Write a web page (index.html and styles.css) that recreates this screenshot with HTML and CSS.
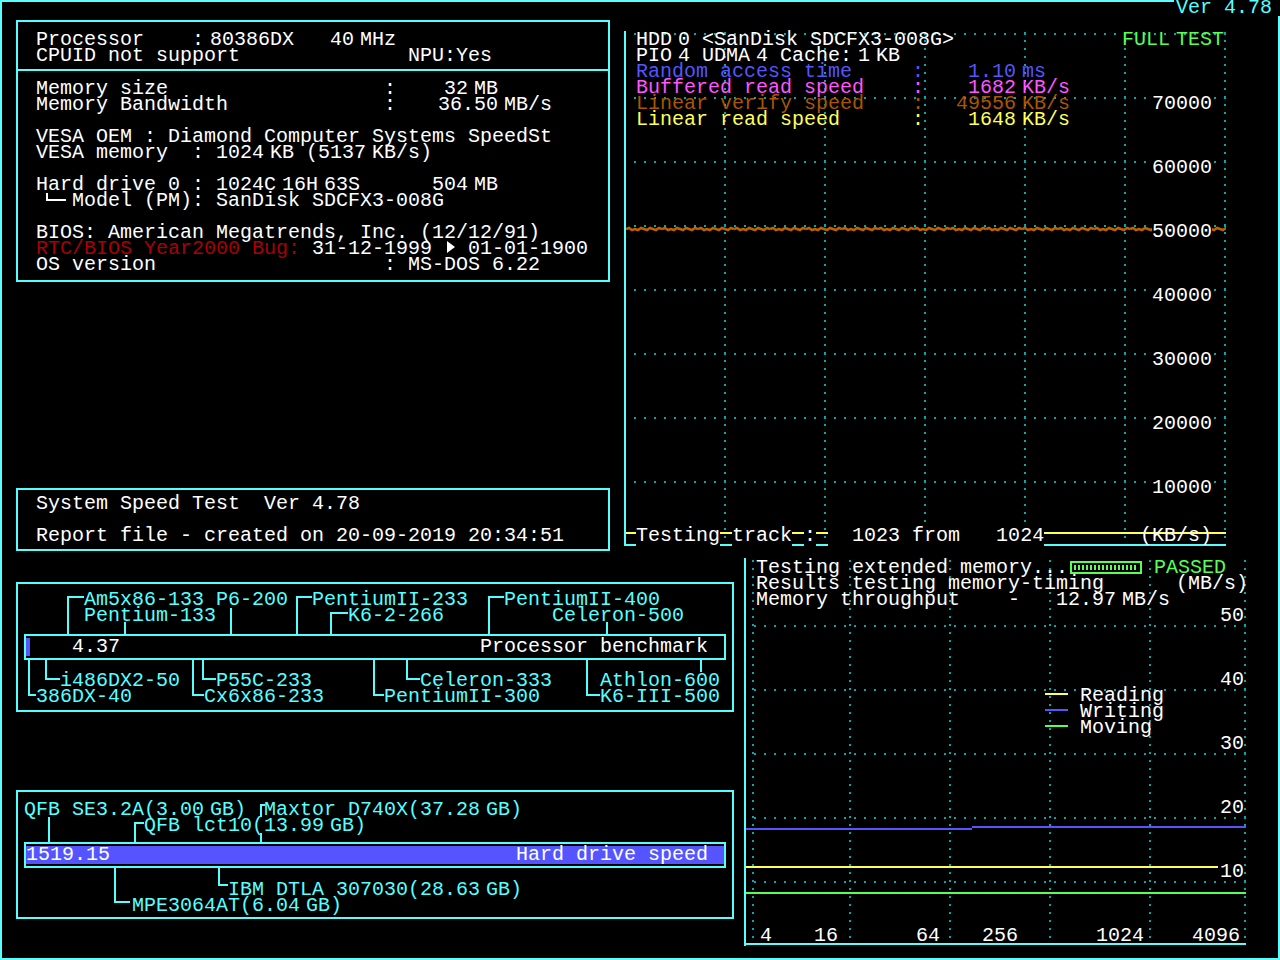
FILE: index.html
```html
<!DOCTYPE html>
<html>
<head>
<meta charset="utf-8">
<title>System Speed Test 4.78</title>
<link rel="stylesheet" href="styles.css">
</head>
<body>
<div class="screen">
  <div class="ver">Ver 4.78</div>

  <div class="top">
    <div class="left-top">
      <section class="box info">
        <div class="cpu">
          <div class="ln">Processor    :<i class="h"></i>80386DX   40<i class="h"></i>MHz</div>
          <div class="ln">CPUID not support              NPU:Yes</div>
        </div>
        <div class="sys">
          <div class="grp">
            <div class="ln">Memory size                  :    32<i class="h"></i>MB</div>
            <div class="ln">Memory Bandwidth             :   <i class="h"></i>36.50<i class="h"></i>MB/s</div>
          </div>
          <div class="grp">
            <div class="ln">VESA OEM : Diamond Computer Systems SpeedSt</div>
            <div class="ln">VESA memory  : 1024<i class="h"></i>KB (5137<i class="h"></i>KB/s)</div>
          </div>
          <div class="grp">
            <div class="ln">Hard drive 0 : 1024C<i class="h"></i>16H<i class="h"></i>63S      504<i class="h"></i>MB</div>
            <div class="ln"><i class="elbow"></i>Model (PM): SanDisk SDCFX3-008G</div>
          </div>
          <div class="grp">
            <div class="ln">BIOS: American Megatrends, Inc. (12/12/91)</div>
            <div class="ln"><span class="red">RTC/BIOS Year2000 Bug: </span>31-12-1999 <i class="tri"></i> 01-01-1900</div>
            <div class="ln">OS version                   : MS-DOS 6.22</div>
          </div>
        </div>
      </section>

      <section class="box sysbox">
        <div class="ln">System Speed Test  Ver 4.78</div>
        <div class="ln gap">Report file - created on 20-09-2019 20:34:51</div>
      </section>
    </div>

    <div class="hdd">
      <svg class="plot" width="602" height="515" viewBox="0 0 602 515">
        <defs>
          <pattern id="jit" width="36" height="8" x="2" y="194" patternUnits="userSpaceOnUse">
            <path d="M0 4 L3 3 L6 5 L9 4 L12 5 L15 3 L18 4 L21 5 L24 3 L27 4 L30 5 L33 3 L36 4" fill="none" stroke="#c06000" stroke-width="2.5"/>
          </pattern>
        </defs>
        <g stroke="#00aaaa" stroke-width="2" stroke-dasharray="2 8">
          <line x1="0" y1="3" x2="602" y2="3"/>
          <line x1="0" y1="67" x2="602" y2="67"/>
          <line x1="0" y1="131" x2="602" y2="131"/>
          <line x1="0" y1="195" x2="602" y2="195"/>
          <line x1="0" y1="259" x2="602" y2="259"/>
          <line x1="0" y1="323" x2="602" y2="323"/>
          <line x1="0" y1="387" x2="602" y2="387"/>
          <line x1="0" y1="451" x2="602" y2="451"/>
        </g>
        <g stroke="#00aaaa" stroke-width="2" stroke-dasharray="2 6">
          <line x1="101" y1="1" x2="101" y2="513"/>
          <line x1="201" y1="1" x2="201" y2="513"/>
          <line x1="301" y1="1" x2="301" y2="513"/>
          <line x1="401" y1="1" x2="401" y2="513"/>
          <line x1="501" y1="1" x2="501" y2="513"/>
          <line x1="601" y1="1" x2="601" y2="513"/>
        </g>
        <rect x="2" y="194" width="600" height="8" fill="url(#jit)"/>
        <rect x="2" y="501" width="600" height="2" fill="#ffff55"/>
        <rect x="0" y="0" width="2" height="515" fill="#55ffff"/>
        <rect x="0" y="513" width="602" height="2" fill="#55ffff"/>
      </svg>
      <div class="hdd-text">
        <div class="ln"><span class="grn full">FULL<i class="h"></i>TEST</span>HDD<i class="h"></i>0 &lt;SanDisk SDCFX3-008G&gt;</div>
        <div class="ln">PIO<i class="h"></i>4 UDMA<i class="h"></i>4 Cache:<i class="h"></i>1<i class="h"></i>KB</div>
        <div class="ln blu"><span class="lbl">Random access time</span><span class="col">:</span><span class="val">1.10</span><i class="h"></i>ms</div>
        <div class="ln mag"><span class="lbl">Buffered read speed</span><span class="col">:</span><span class="val">1682</span><i class="h"></i>KB/s</div>
        <div class="ln brn"><span class="ylab">70000</span><span class="lbl">Linear verify speed</span><span class="col">:</span><span class="val">49556</span><i class="h"></i>KB/s</div>
        <div class="ln yel"><span class="lbl">Linear read speed</span><span class="col">:</span><span class="val">1648</span><i class="h"></i>KB/s</div>
        <div class="scale">
          <div class="ln"><span class="ylab">60000</span></div>
          <div class="ln"><span class="ylab">50000</span></div>
          <div class="ln"><span class="ylab">40000</span></div>
          <div class="ln"><span class="ylab">30000</span></div>
          <div class="ln"><span class="ylab">20000</span></div>
          <div class="ln"><span class="ylab">10000</span></div>
        </div>
        <div class="ln track"><span class="kbs">(KB/s)</span><span class="bk">Testing</span> <span class="bk">track</span> <span class="bk">:</span> <span class="bk">  1023 from   1024</span></div>
      </div>
    </div>
  </div>

  <div class="bottom">
    <div class="left-bottom">
      <section class="box bench">
        <svg class="leaders" width="718" height="130" viewBox="0 0 718 130">
          <g fill="#55ffff">
            <rect x="51" y="14" width="2" height="38"/><rect x="51" y="14" width="17" height="2"/>
            <rect x="108" y="40" width="2" height="12"/>
            <rect x="214" y="26" width="2" height="26"/>
            <rect x="280" y="14" width="2" height="38"/><rect x="280" y="14" width="16" height="2"/>
            <rect x="314" y="30" width="2" height="22"/><rect x="314" y="30" width="18" height="2"/>
            <rect x="472" y="14" width="2" height="38"/><rect x="472" y="14" width="16" height="2"/>
            <rect x="590" y="40" width="2" height="12"/>
            <rect x="12" y="78" width="2" height="36"/><rect x="12" y="112" width="8" height="2"/>
            <rect x="29" y="78" width="2" height="20"/><rect x="29" y="96" width="15" height="2"/>
            <rect x="176" y="78" width="2" height="36"/><rect x="176" y="112" width="12" height="2"/>
            <rect x="186" y="78" width="2" height="20"/><rect x="186" y="96" width="14" height="2"/>
            <rect x="357" y="78" width="2" height="36"/><rect x="357" y="112" width="11" height="2"/>
            <rect x="390" y="78" width="2" height="20"/><rect x="390" y="96" width="14" height="2"/>
            <rect x="570" y="78" width="2" height="36"/><rect x="570" y="112" width="14" height="2"/>
            <rect x="684" y="78" width="2" height="12"/>
          </g>
        </svg>
        <div class="ln cy">     Am5x86-133 P6-200  PentiumII-233   PentiumII-400</div>
        <div class="ln cy">     Pentium-133           K6-2-266         Celeron-500</div>
        <div class="bar">
          <i class="fill"></i>
          <span class="score">4.37</span>
          <span class="bar-title">Processor benchmark</span>
        </div>
        <div class="ln cy below">   i486DX2-50   P55C-233         Celeron-333    Athlon-600</div>
        <div class="ln cy"> 386DX-40      Cx6x86-233     PentiumII-300     K6-III-500</div>
      </section>

      <section class="box hdbench">
        <svg class="leaders" width="718" height="129" viewBox="0 0 718 129">
          <g fill="#55ffff">
            <rect x="32" y="27" width="2" height="25"/>
            <rect x="244" y="14" width="2" height="13"/><rect x="244" y="14" width="5" height="2"/>
            <rect x="244" y="43" width="2" height="9"/>
            <rect x="118" y="32" width="2" height="20"/><rect x="118" y="32" width="10" height="2"/>
            <rect x="98" y="78" width="2" height="35"/><rect x="98" y="111" width="16" height="2"/>
            <rect x="202" y="78" width="2" height="18"/><rect x="202" y="94" width="10" height="2"/>
          </g>
        </svg>
        <div class="ln cy">QFB SE3.2A(3.00<i class="h"></i>GB) <i class="h"></i>Maxtor D740X(37.28<i class="h"></i>GB)</div>
        <div class="ln cy">          QFB lct10(13.99<i class="h"></i>GB)</div>
        <div class="bar hbar">
          <div class="hfill">
            <span class="score">1519.15</span>
            <span class="bar-title">Hard drive speed</span>
          </div>
        </div>
        <div class="ln cy below2">                 IBM DTLA 307030(28.63<i class="h"></i>GB)</div>
        <div class="ln cy">         MPE3064AT(6.04<i class="h"></i>GB)</div>
      </section>
    </div>

    <div class="mem">
      <svg class="plot" width="502" height="391" viewBox="0 0 502 391">
        <g stroke="#00aaaa" stroke-width="2" stroke-dasharray="2 8">
          <line x1="0" y1="71" x2="502" y2="71"/>
          <line x1="0" y1="135" x2="502" y2="135"/>
          <line x1="0" y1="199" x2="502" y2="199"/>
          <line x1="0" y1="263" x2="502" y2="263"/>
          <line x1="0" y1="327" x2="502" y2="327"/>
        </g>
        <g stroke="#00aaaa" stroke-width="2" stroke-dasharray="2 6">
          <line x1="9" y1="5" x2="9" y2="389"/>
          <line x1="106" y1="5" x2="106" y2="389"/>
          <line x1="206" y1="5" x2="206" y2="389"/>
          <line x1="306" y1="5" x2="306" y2="389"/>
          <line x1="406" y1="5" x2="406" y2="389"/>
          <line x1="501" y1="5" x2="501" y2="389"/>
        </g>
        <rect x="2" y="273" width="226" height="2" fill="#5555ff"/>
        <rect x="228" y="271" width="274" height="2" fill="#5555ff"/>
        <rect x="2" y="311" width="472" height="2" fill="#ffff55"/>
        <rect x="2" y="337" width="500" height="2" fill="#55ff55"/>
        <rect x="301" y="138" width="23" height="2" fill="#ffff55"/>
        <rect x="301" y="154" width="23" height="2" fill="#5555ff"/>
        <rect x="301" y="170" width="23" height="2" fill="#55ff55"/>
        <rect x="0" y="3" width="2" height="388" fill="#55ffff"/>
        <rect x="0" y="388" width="502" height="2" fill="#55ffff"/>
      </svg>
      <div class="mem-text">
        <div class="ln">Testing extended memory...<i class="prog"></i><span class="grn passed">PASSED</span></div>
        <div class="ln">Results testing memory-timing<span class="unit">(MB/s)</span></div>
        <div class="ln">Memory throughput    -   12.97<i class="h"></i>MB/s</div>
        <div class="ln"><span class="mlab">50</span></div>
        <div class="ln sp3"><span class="mlab">40</span></div>
        <div class="ln"><span class="legend">Reading</span></div>
        <div class="ln"><span class="legend">Writing</span></div>
        <div class="ln"><span class="legend">Moving</span></div>
        <div class="ln"><span class="mlab">30</span></div>
        <div class="ln sp3"><span class="mlab">20</span></div>
        <div class="ln sp3"><span class="mlab">10</span></div>
        <div class="ln sp3 xaxis">4   <i class="h"></i>16      <i class="h"></i>64   <i class="h"></i>256      <i class="h"></i>1024    4096</div>
      </div>
    </div>
  </div>
</div>
</body>
</html>
```

FILE: styles.css
```css
* { box-sizing: border-box; }

html, body {
  margin: 0;
  padding: 0;
  background: #000;
}

body {
  width: 1280px;
  height: 960px;
  overflow: hidden;
  font-family: "Liberation Mono", "DejaVu Sans Mono", monospace;
  font-size: 20px;
  line-height: 16px;
  color: #fff;
}

.screen {
  position: relative;
  width: 1280px;
  height: 960px;
  border: 2px solid #55ffff;
}

.ver {
  position: absolute;
  top: -2px;
  right: -2px;
  height: 16px;
  padding: 0 8px 0 2px;
  background: #000;
  color: #55ffff;
  white-space: pre;
}

.ln {
  height: 16px;
  white-space: pre;
}

.h {
  display: inline-block;
  width: 6px;
}

.red { color: #aa0000; }
.cy { color: #55ffff; }
.grn { color: #55ff55; }
.blu { color: #5555ff; }
.mag { color: #ff55ff; }
.brn { color: #aa5500; }
.yel { color: #ffff55; }

/* ---------- top row ---------- */
.top {
  display: flex;
  height: 551px;
}

.left-top {
  display: flex;
  flex-direction: column;
  width: 594px;
  margin: 18px 0 0 14px;
}

.box {
  border: 2px solid #55ffff;
}

.info {
  height: 262px;
}

.cpu {
  height: 47px;
  padding: 10px 0 0 18px;
}

.sys {
  border-top: 2px solid #55ffff;
  padding: 10px 0 0 18px;
}

.grp + .grp {
  margin-top: 16px;
}

.elbow {
  display: inline-block;
  width: 20px;
  height: 8px;
  margin: 0 6px 0 10px;
  vertical-align: top;
  border-left: 2px solid #fff;
  border-bottom: 2px solid #fff;
}

.tri {
  display: inline-block;
  width: 0;
  height: 0;
  margin: 0 1px 0 3px;
  vertical-align: top;
  border-left: 8px solid #fff;
  border-top: 6px solid transparent;
  border-bottom: 6px solid transparent;
}

.sysbox {
  height: 63px;
  margin-top: 206px;
  padding: 6px 0 0 18px;
}

.gap {
  margin-top: 16px;
}

/* ---------- HDD graph ---------- */
.hdd {
  position: relative;
  width: 602px;
  height: 515px;
  margin: 29px 0 0 14px;
}

.plot {
  position: absolute;
  left: 0;
  top: 0;
}

.hdd-text {
  position: relative;
  padding: 1px 0 0 12px;
}

.full {
  float: right;
  margin-right: 2px;
}

.lbl {
  display: inline-block;
  width: 276px;
}

.col {
  display: inline-block;
  width: 12px;
}

.val {
  display: inline-block;
  width: 92px;
  text-align: right;
}

.ylab {
  float: right;
  margin-right: 14px;
  color: #fff;
  background: #000;
}

.scale {
  margin-top: 32px;
}

.scale .ln + .ln {
  margin-top: 48px;
}

.track {
  margin-top: 32px;
}

.bk {
  background: #000;
}

.kbs {
  float: right;
  margin-right: 14px;
}

/* ---------- benchmarks ---------- */
.bottom {
  display: flex;
}

.left-bottom {
  width: 718px;
  margin: 29px 0 0 14px;
}

.bench {
  position: relative;
  height: 130px;
  padding: 8px 0 0 6px;
}

.hdbench {
  position: relative;
  height: 129px;
  margin-top: 78px;
  padding: 10px 0 0 6px;
}

.leaders {
  position: absolute;
  left: -2px;
  top: -2px;
}

.bench .ln,
.hdbench .ln {
  position: relative;
}

.bar {
  display: flex;
  align-items: center;
  width: 702px;
  height: 26px;
  margin-top: 10px;
  border: 2px solid #55ffff;
}

.fill {
  width: 4px;
  height: 18px;
  background: #5555ff;
}

.score {
  margin-left: 42px;
  white-space: pre;
}

.bar-title {
  margin-left: auto;
  margin-right: 16px;
  white-space: pre;
}

.below {
  margin-top: 13px;
}

.hbar {
  margin-top: 8px;
}

.hfill {
  display: flex;
  align-items: center;
  width: 100%;
  height: 18px;
  background: #5555ff;
}

.hfill .score {
  margin-left: 0;
}

.below2 {
  margin-top: 14px;
}

/* ---------- memory graph ---------- */
.mem {
  position: relative;
  width: 502px;
  height: 391px;
  margin: 2px 0 0 10px;
}

.mem-text {
  position: relative;
  padding: 5px 0 0 12px;
}

.prog {
  display: inline-block;
  width: 72px;
  height: 13px;
  margin-left: 2px;
  vertical-align: top;
  margin-top: 1px;
  border: 2px solid #55ff55;
  background: repeating-linear-gradient(90deg, #55ff55 0 2px, transparent 2px 4px) 2px 2px / 64px 5px no-repeat;
}

.passed {
  float: right;
  margin-right: 20px;
}

.unit {
  float: right;
  margin-right: -2px;
}

.mlab {
  float: right;
  margin-right: 2px;
  background: #000;
}

.legend {
  margin-left: 324px;
}

.sp3 {
  margin-top: 48px;
}

.xaxis {
  margin-left: 4px;
}
```
